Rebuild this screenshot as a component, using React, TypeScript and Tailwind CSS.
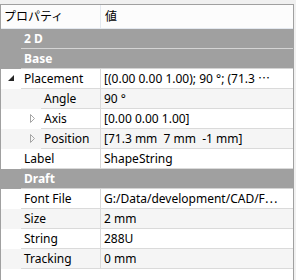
import React from 'react';

type Row =
  | { kind: 'group'; label: string }
  | { kind: 'prop'; name: string; value: string; level: 0 | 1; arrow?: 'open' | 'closed' };

const rows: Row[] = [
  { kind: 'group', label: '2 D' },
  { kind: 'group', label: 'Base' },
  { kind: 'prop', name: 'Placement', value: '[(0.00 0.00 1.00); 90 °; (71.3 ⋯', level: 0, arrow: 'open' },
  { kind: 'prop', name: 'Angle', value: '90 °', level: 1 },
  { kind: 'prop', name: 'Axis', value: '[0.00 0.00 1.00]', level: 1, arrow: 'closed' },
  { kind: 'prop', name: 'Position', value: '[71.3 mm  7 mm  -1 mm]', level: 1, arrow: 'closed' },
  { kind: 'prop', name: 'Label', value: 'ShapeString', level: 0 },
  { kind: 'group', label: 'Draft' },
  { kind: 'prop', name: 'Font File', value: 'G:/Data/development/CAD/F⋯', level: 0 },
  { kind: 'prop', name: 'Size', value: '2 mm', level: 0 },
  { kind: 'prop', name: 'String', value: '288U', level: 0 },
  { kind: 'prop', name: 'Tracking', value: '0 mm', level: 0 },
];

function OpenArrow() {
  return (
    <svg width="20" height="19" viewBox="0 0 20 19" className="shrink-0">
      <polygon points="13,6 13,12 7,12" fill="#262626" />
    </svg>
  );
}

function ClosedArrow() {
  return (
    <svg width="20" height="19" viewBox="0 0 20 19" className="shrink-0">
      <polygon points="9.5,5.5 13.5,9.5 9.5,13.5" fill="none" stroke="#a6a6a6" strokeWidth="1" />
    </svg>
  );
}

export default function App() {
  // alternate shading restarts after each group header
  let stripe = 0;

  return (
    <div
      className="w-[296px] h-[280px] bg-[#f0f0f0] pt-1 overflow-hidden text-[12px] text-black"
      style={{ fontFamily: '"Noto Sans", "Noto Sans CJK JP", sans-serif' }}
    >
      <div className="w-[294px] h-[300px] bg-white border-t border-l border-r border-[#a0a0a0] flex flex-col">
        <div className="h-[24px] flex bg-[#fcfcfc] border-b border-[#e3e8ef]">
          <div className="w-[100px] border-r border-[#e3e8ef] pl-[3px] flex items-center">プロパティ</div>
          <div className="flex-1 pl-[4px] flex items-center">値</div>
        </div>

        {rows.map((r, i) => {
          if (r.kind === 'group') {
            stripe = 0;
            return (
              <div key={i} className="h-[20px] flex bg-[#a0a0a0]">
                <div className="w-[20px] shrink-0" />
                <div className="flex-1 border-b border-[#d4d4d4] pl-[3px] flex items-center font-bold text-white">
                  {r.label}
                </div>
              </div>
            );
          }
          const shaded = stripe++ % 2 === 1;
          return (
            <div key={i} className={`h-[20px] flex ${shaded ? 'bg-[#f5f5f5]' : 'bg-white'}`}>
              {r.level === 0 ? (
                <div className="w-[20px] shrink-0 flex items-start">
                  {r.arrow === 'open' && <OpenArrow />}
                </div>
              ) : (
                <div className="w-[40px] shrink-0 flex justify-end">
                  {r.arrow === 'closed' && <ClosedArrow />}
                </div>
              )}
              <div className="flex-1 flex border-b border-[#dadada]">
                <div
                  className={`${r.level === 0 ? 'w-[80px]' : 'w-[60px]'} shrink-0 border-r border-[#dadada] pl-[3px] flex items-center whitespace-nowrap overflow-hidden`}
                >
                  {r.name}
                </div>
                <div className="flex-1 pl-[3px] flex items-center whitespace-pre overflow-hidden">{r.value}</div>
              </div>
            </div>
          );
        })}
      </div>
    </div>
  );
}
